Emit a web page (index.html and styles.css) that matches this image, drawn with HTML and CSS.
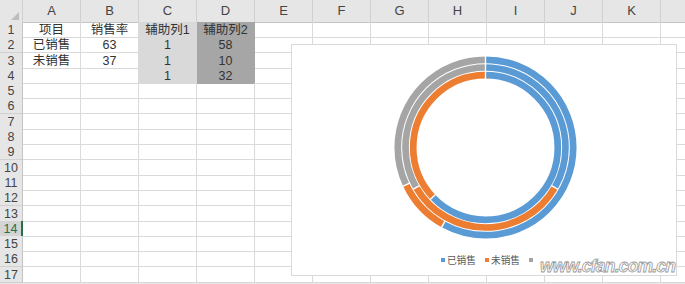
FILE: index.html
```html
<!DOCTYPE html>
<html lang="zh-CN">
<head>
  <meta charset="UTF-8">
  <title>销售率 圆环图</title>
  <link rel="stylesheet" href="styles.css">
</head>
<body>
  <div class="sheet">
    <!-- 列标题 -->
    <div class="row head">
      <span class="corner"><i class="tri"></i></span>
      <span>A</span><span>B</span><span>C</span><span>D</span><span>E</span><span>F</span>
      <span>G</span><span>H</span><span>I</span><span>J</span><span>K</span><span></span>
    </div>

    <!-- 数据 -->
    <div class="row">
      <span class="rh">1</span><span>项目</span><span>销售率</span><span class="fill1">辅助列1</span><span class="fill2">辅助列2</span>
      <span></span><span></span><span></span><span></span><span></span><span></span><span></span><span></span>
    </div>
    <div class="row">
      <span class="rh">2</span><span>已销售</span><span>63</span><span class="fill1">1</span><span class="fill2">58</span>
      <span></span><span></span><span></span><span></span><span></span><span></span><span></span><span></span>
    </div>
    <div class="row">
      <span class="rh">3</span><span>未销售</span><span>37</span><span class="fill1">1</span><span class="fill2">10</span>
      <span></span><span></span><span></span><span></span><span></span><span></span><span></span><span></span>
    </div>
    <div class="row">
      <span class="rh">4</span><span></span><span></span><span class="fill1">1</span><span class="fill2">32</span>
      <span></span><span></span><span></span><span></span><span></span><span></span><span></span><span></span>
    </div>

    <!-- 空行 -->
    <div class="row"><span class="rh">5</span><span></span><span></span><span></span><span></span><span></span><span></span><span></span><span></span><span></span><span></span><span></span><span></span></div>
    <div class="row"><span class="rh">6</span><span></span><span></span><span></span><span></span><span></span><span></span><span></span><span></span><span></span><span></span><span></span><span></span></div>
    <div class="row"><span class="rh">7</span><span></span><span></span><span></span><span></span><span></span><span></span><span></span><span></span><span></span><span></span><span></span><span></span></div>
    <div class="row"><span class="rh">8</span><span></span><span></span><span></span><span></span><span></span><span></span><span></span><span></span><span></span><span></span><span></span><span></span></div>
    <div class="row"><span class="rh">9</span><span></span><span></span><span></span><span></span><span></span><span></span><span></span><span></span><span></span><span></span><span></span><span></span></div>
    <div class="row"><span class="rh">10</span><span></span><span></span><span></span><span></span><span></span><span></span><span></span><span></span><span></span><span></span><span></span><span></span></div>
    <div class="row"><span class="rh">11</span><span></span><span></span><span></span><span></span><span></span><span></span><span></span><span></span><span></span><span></span><span></span><span></span></div>
    <div class="row"><span class="rh">12</span><span></span><span></span><span></span><span></span><span></span><span></span><span></span><span></span><span></span><span></span><span></span><span></span></div>
    <div class="row"><span class="rh">13</span><span></span><span></span><span></span><span></span><span></span><span></span><span></span><span></span><span></span><span></span><span></span><span></span></div>
    <div class="row"><span class="rh active">14</span><span></span><span></span><span></span><span></span><span></span><span></span><span></span><span></span><span></span><span></span><span></span><span></span></div>
    <div class="row"><span class="rh">15</span><span></span><span></span><span></span><span></span><span></span><span></span><span></span><span></span><span></span><span></span><span></span><span></span></div>
    <div class="row"><span class="rh">16</span><span></span><span></span><span></span><span></span><span></span><span></span><span></span><span></span><span></span><span></span><span></span><span></span></div>
    <div class="row"><span class="rh">17</span><span></span><span></span><span></span><span></span><span></span><span></span><span></span><span></span><span></span><span></span><span></span><span></span></div>

    <!-- 圆环图 -->
    <div class="chart">
      <svg class="donut" width="384" height="200" viewBox="0 0 384 200">
        <g transform="rotate(-90 193.5 102.5)" fill="none" stroke-width="6.7">
          <!-- 内环: 销售率 -->
          <circle cx="193.5" cy="102.5" r="72.3" pathLength="100" stroke="#5b9bd5" stroke-dasharray="63 37"/>
          <circle cx="193.5" cy="102.5" r="72.3" pathLength="100" stroke="#ed7d31" stroke-dasharray="37 63" stroke-dashoffset="-63"/>
          <!-- 中环: 辅助列1 -->
          <circle cx="193.5" cy="102.5" r="80" pathLength="100" stroke="#5b9bd5" stroke-dasharray="33.333 66.667"/>
          <circle cx="193.5" cy="102.5" r="80" pathLength="100" stroke="#ed7d31" stroke-dasharray="33.333 66.667" stroke-dashoffset="-33.333"/>
          <circle cx="193.5" cy="102.5" r="80" pathLength="100" stroke="#a5a5a5" stroke-dasharray="33.334 66.666" stroke-dashoffset="-66.666"/>
          <!-- 外环: 辅助列2 -->
          <circle cx="193.5" cy="102.5" r="87.7" pathLength="100" stroke="#5b9bd5" stroke-dasharray="58 42"/>
          <circle cx="193.5" cy="102.5" r="87.7" pathLength="100" stroke="#ed7d31" stroke-dasharray="10 90" stroke-dashoffset="-58"/>
          <circle cx="193.5" cy="102.5" r="87.7" pathLength="100" stroke="#a5a5a5" stroke-dasharray="32 68" stroke-dashoffset="-68"/>
        </g>
        <!-- 分隔线 -->
        <g stroke="#fff" stroke-width="1.4">
          <line x1="193.5" y1="10" x2="193.5" y2="35"/>
          <line x1="143.56" y1="149.39" x2="137.95" y2="154.66"/>
          <line x1="259.49" y1="140.6" x2="266.07" y2="144.4"/>
          <line x1="127.51" y1="140.6" x2="120.93" y2="144.4"/>
          <line x1="153.13" y1="175.93" x2="149.42" y2="182.68"/>
          <line x1="117.68" y1="138.18" x2="110.71" y2="141.46"/>
        </g>
      </svg>
      <div class="legend">
        <span class="item"><i class="key blue"></i>已销售</span>
        <span class="item"><i class="key orange"></i>未销售</span>
        <span class="item"><i class="key gray"></i></span>
      </div>
    </div>

    <div class="watermark">www.cfan.com.cn</div>
  </div>
</body>
</html>
```

FILE: styles.css
```css
* {
  box-sizing: border-box;
}
body {
  margin: 0;
  width: 685px;
  height: 284px;
  overflow: hidden;
  background-color: #e6e6e6;
  font-family: "Liberation Sans", "Noto Sans CJK SC", sans-serif;
  color: #333;
}
.sheet {
  position: relative;
  background-color: #fff;
  width: 685px;
}
.row {
  display: grid;
  grid-template-columns: 23px repeat(12, 58px);
  height: 15.3px;
}
.row > span {
  border-right: 1px solid #dadada;
  border-bottom: 1px solid #dadada;
  padding-top: 1px;
  text-align: center;
  font-size: 12.5px;
  line-height: 14px;
  white-space: nowrap;
}

/* 标题行 */
.head {
  height: 22px;
}
.head > span {
  background-color: #e6e6e6;
  border-right: 1px solid #d0d0d0;
  border-bottom: 1px solid #c4c4c4;
  padding-top: 0;
  color: #444;
  font-size: 13px;
  line-height: 22px;
}
.corner {
  display: flex;
  justify-content: flex-end;
  align-items: flex-end;
  padding: 0 3px 2px 0;
}
.tri {
  width: 0;
  height: 0;
  border-left: 8px solid transparent;
  border-bottom: 8px solid #bdbdbd;
}
.row > .rh {
  background-color: #e6e6e6;
  border-right: 1px solid #c4c4c4;
  border-bottom: 1px solid #d0d0d0;
  color: #444;
  font-size: 12.5px;
}
.row > .rh.active {
  background-color: #d4d4d4;
  color: #217346;
  border-right: 2px solid #217346;
}

/* 填充色 */
.row > .fill1 {
  background-color: #d9d9d9;
  border-color: #d9d9d9;
}
.row > .fill2 {
  background-color: #a6a6a6;
  border-color: #a6a6a6;
}

/* 图表 */
.chart {
  position: absolute;
  left: 291px;
  top: 44px;
  width: 386px;
  height: 232px;
  border: 1px solid #d9d9d9;
  background-color: #fff;
  display: flex;
  flex-direction: column;
}
.donut {
  display: block;
}
.legend {
  display: flex;
  justify-content: center;
  gap: 9px;
  padding: 9px 0 0 6px;
  font-family: "Noto Sans CJK SC", sans-serif;
  font-size: 9.7px;
  line-height: 12px;
  color: #595959;
}
.item {
  display: flex;
  align-items: center;
  gap: 2px;
}
.key {
  width: 4px;
  height: 4px;
}
.blue { background-color: #5b9bd5; }
.orange { background-color: #ed7d31; }
.gray { background-color: #a5a5a5; }

/* 水印 */
.watermark {
  position: absolute;
  left: 540px;
  top: 256px;
  font-family: "Liberation Sans", sans-serif;
  font-size: 17.5px;
  font-weight: bold;
  font-style: italic;
  letter-spacing: -0.8px;
  color: #fafafa;
  -webkit-text-stroke: 0.8px #9a9a9a;
}
```
